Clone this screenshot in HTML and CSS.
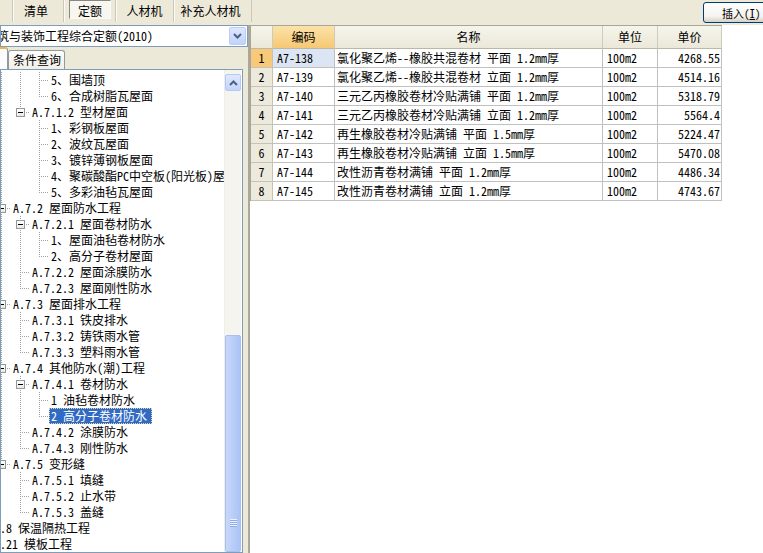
FILE: index.html
```html
<!DOCTYPE html>
<html lang="zh-CN">
<head>
<meta charset="utf-8">
<title>定额</title>
<link rel="stylesheet" href="styles.css">
</head>
<body>
<div class="app">
  <header class="toolbar">
    <nav class="tabs">
      <span class="tab t1">清单</span>
      <span class="tab t2"><span class="face">定额</span></span>
      <span class="tab t3">人材机</span>
      <span class="tab t4">补充人材机</span>
    </nav>
    <button class="insert">插入(<u>I</u>)</button>
  </header>
  <div class="main">
    <aside class="left">
      <div class="combo">
        <span class="combo-text">建筑与装饰工程综合定额(2010)</span>
        <span class="combo-btn"><svg width="9" height="6" viewBox="0 0 9 6"><polyline points="1,1 4.5,4.5 8,1" fill="none" stroke="#4d6185" stroke-width="2"/></svg></span>
      </div>
      <div class="subtabs">
        <span class="subtab current"></span>
        <span class="subtab">条件查询</span>
      </div>
      <div class="treebox">
        <div class="tree">
          <div class="row"><i class="g v"></i><i class="g v"></i><i class="g v"></i><i class="c t"></i><span class="lbl">5、围墙顶</span></div>
          <div class="row"><i class="g v"></i><i class="g v"></i><i class="g v"></i><i class="c e"></i><span class="lbl">6、合成树脂瓦屋面</span></div>
          <div class="row"><i class="g v"></i><i class="g v"></i><i class="c e"><b class="x"></b></i><span class="lbl">A.7.1.2 型材屋面</span></div>
          <div class="row"><i class="g v"></i><i class="g v"></i><i class="g"></i><i class="c t"></i><span class="lbl">1、彩钢板屋面</span></div>
          <div class="row"><i class="g v"></i><i class="g v"></i><i class="g"></i><i class="c t"></i><span class="lbl">2、波纹瓦屋面</span></div>
          <div class="row"><i class="g v"></i><i class="g v"></i><i class="g"></i><i class="c t"></i><span class="lbl">3、镀锌薄钢板屋面</span></div>
          <div class="row"><i class="g v"></i><i class="g v"></i><i class="g"></i><i class="c t"></i><span class="lbl">4、聚碳酸酯PC中空板(阳光板)屋面</span></div>
          <div class="row"><i class="g v"></i><i class="g v"></i><i class="g"></i><i class="c e"></i><span class="lbl">5、多彩油毡瓦屋面</span></div>
          <div class="row"><i class="g v"></i><i class="c t"><b class="x"></b></i><span class="lbl">A.7.2 屋面防水工程</span></div>
          <div class="row"><i class="g v"></i><i class="g v"></i><i class="c t"><b class="x"></b></i><span class="lbl">A.7.2.1 屋面卷材防水</span></div>
          <div class="row"><i class="g v"></i><i class="g v"></i><i class="g v"></i><i class="c t"></i><span class="lbl">1、屋面油毡卷材防水</span></div>
          <div class="row"><i class="g v"></i><i class="g v"></i><i class="g v"></i><i class="c e"></i><span class="lbl">2、高分子卷材屋面</span></div>
          <div class="row"><i class="g v"></i><i class="g v"></i><i class="c t"></i><span class="lbl">A.7.2.2 屋面涂膜防水</span></div>
          <div class="row"><i class="g v"></i><i class="g v"></i><i class="c e"></i><span class="lbl">A.7.2.3 屋面刚性防水</span></div>
          <div class="row"><i class="g v"></i><i class="c t"><b class="x"></b></i><span class="lbl">A.7.3 屋面排水工程</span></div>
          <div class="row"><i class="g v"></i><i class="g v"></i><i class="c t"></i><span class="lbl">A.7.3.1 铁皮排水</span></div>
          <div class="row"><i class="g v"></i><i class="g v"></i><i class="c t"></i><span class="lbl">A.7.3.2 铸铁雨水管</span></div>
          <div class="row"><i class="g v"></i><i class="g v"></i><i class="c e"></i><span class="lbl">A.7.3.3 塑料雨水管</span></div>
          <div class="row"><i class="g v"></i><i class="c t"><b class="x"></b></i><span class="lbl">A.7.4 其他防水(潮)工程</span></div>
          <div class="row"><i class="g v"></i><i class="g v"></i><i class="c t"><b class="x"></b></i><span class="lbl">A.7.4.1 卷材防水</span></div>
          <div class="row"><i class="g v"></i><i class="g v"></i><i class="g v"></i><i class="c t"></i><span class="lbl">1 油毡卷材防水</span></div>
          <div class="row"><i class="g v"></i><i class="g v"></i><i class="g v"></i><i class="c e"></i><span class="lbl selected">2 高分子卷材防水</span></div>
          <div class="row"><i class="g v"></i><i class="g v"></i><i class="c t"></i><span class="lbl">A.7.4.2 涂膜防水</span></div>
          <div class="row"><i class="g v"></i><i class="g v"></i><i class="c e"></i><span class="lbl">A.7.4.3 刚性防水</span></div>
          <div class="row"><i class="g v"></i><i class="c e"><b class="x"></b></i><span class="lbl">A.7.5 变形缝</span></div>
          <div class="row"><i class="g v"></i><i class="g"></i><i class="c t"></i><span class="lbl">A.7.5.1 填缝</span></div>
          <div class="row"><i class="g v"></i><i class="g"></i><i class="c t"></i><span class="lbl">A.7.5.2 止水带</span></div>
          <div class="row"><i class="g v"></i><i class="g"></i><i class="c e"></i><span class="lbl">A.7.5.3 盖缝</span></div>
          <div class="row"><i class="c t"><b class="x plus"></b></i><span class="lbl">A.8 保温隔热工程</span></div>
          <div class="row"><i class="c t"><b class="x plus"></b></i><span class="lbl">A.21 模板工程</span></div>
        </div>
        <div class="vscroll">
          <span class="sb-up"><svg width="9" height="6" viewBox="0 0 9 6"><polyline points="1,5 4.5,1.5 8,5" fill="none" stroke="#4d6185" stroke-width="2"/></svg></span>
          <span class="sb-gap"></span>
          <span class="sb-thumb"><span class="grip"></span></span>
        </div>
      </div>
    </aside>
    <section class="right">
      <div class="grid">
        <div class="h"></div><div class="h sel">编码</div><div class="h">名称</div><div class="h">单位</div><div class="h">单价</div>

        <div class="n sel">1</div><div class="d code cur">A7-138</div><div class="d name">氯化聚乙烯--橡胶共混卷材 平面 1.2mm厚</div><div class="d unit">100m2</div><div class="d price">4268.55</div>
        <div class="n">2</div><div class="d code">A7-139</div><div class="d name">氯化聚乙烯--橡胶共混卷材 立面 1.2mm厚</div><div class="d unit">100m2</div><div class="d price">4514.16</div>
        <div class="n">3</div><div class="d code">A7-140</div><div class="d name">三元乙丙橡胶卷材冷贴满铺 平面 1.2mm厚</div><div class="d unit">100m2</div><div class="d price">5318.79</div>
        <div class="n">4</div><div class="d code">A7-141</div><div class="d name">三元乙丙橡胶卷材冷贴满铺 立面 1.2mm厚</div><div class="d unit">100m2</div><div class="d price">5564.4</div>
        <div class="n">5</div><div class="d code">A7-142</div><div class="d name">再生橡胶卷材冷贴满铺 平面 1.5mm厚</div><div class="d unit">100m2</div><div class="d price">5224.47</div>
        <div class="n">6</div><div class="d code">A7-143</div><div class="d name">再生橡胶卷材冷贴满铺 立面 1.5mm厚</div><div class="d unit">100m2</div><div class="d price">5470.08</div>
        <div class="n">7</div><div class="d code">A7-144</div><div class="d name">改性沥青卷材满铺 平面 1.2mm厚</div><div class="d unit">100m2</div><div class="d price">4486.34</div>
        <div class="n">8</div><div class="d code">A7-145</div><div class="d name">改性沥青卷材满铺 立面 1.2mm厚</div><div class="d unit">100m2</div><div class="d price">4743.67</div>
      </div>
    </section>
  </div>
</div>
</body>
</html>
```
FILE: styles.css
```css
* { box-sizing: border-box; }
html, body { margin: 0; padding: 0; }
body {
  width: 763px;
  height: 553px;
  overflow: hidden;
  background: #ece9d8;
  font-family: "Noto Sans Mono CJK SC", "Noto Sans CJK SC", sans-serif;
  font-size: 12px;
  color: #000;
}
.app { display: flex; flex-direction: column; height: 553px; }

/* toolbar */
.toolbar {
  height: 25px;
  flex: none;
  display: flex;
  justify-content: space-between;
  align-items: flex-start;
  overflow: hidden;
}
.tabs { display: flex; height: 22px; margin-left: 12px; }
.tab {
  display: flex;
  align-items: center;
  justify-content: center;
  height: 22px;
  border-left: 1px solid #cbc8b8;
  box-shadow: inset 1px 0 #fbfaf6;
  line-height: 14px;
}
.tab:last-child { border-right: 1px solid #cbc8b8; }
.t1 { width: 51px; padding-right: 4px; }
.t2 { width: 52px; align-items: flex-start; }
.t3 { width: 58px; }
.t4 { width: 79px; padding-right: 4px; }
.face {
  width: 42px;
  height: 19px;
  margin-left: 1px;
  padding-top: 3px;
  text-align: center;
  border: 1px solid;
  border-color: #8a887e #fbfaf6 #fbfaf6 #8a887e;
  background: #f7f6f1;
}
.insert {
  margin: 2px -14px 0 0;
  width: 74px;
  height: 21px;
  padding: 0 0 0 18px;
  text-align: left;
  font: inherit;
  font-size: 11px;
  color: #000;
  border: 1px solid #003c74;
  border-radius: 3px;
  background: linear-gradient(#ffffff, #f4f3ee 70%, #d6d0c5);
}

/* main */
.main { flex: 1; display: flex; min-height: 0; }
.left { width: 248px; flex: none; display: flex; flex-direction: column; }
.combo {
  height: 22px;
  flex: none;
  border: 1px solid #7f9db9;
  background: #fff;
  display: flex;
  align-items: center;
  overflow: hidden;
}
.combo-text { flex: 1; margin-left: -16px; white-space: nowrap; overflow: hidden; line-height: 16px; }
.combo-btn {
  width: 17px;
  height: 18px;
  margin-right: 1px;
  flex: none;
  display: flex;
  align-items: center;
  justify-content: center;
  border: 1px solid #bccef6;
  border-radius: 2px;
  background: linear-gradient(#dde7fd, #c1d3fb);
}

.subtabs { height: 22px; flex: none; display: flex; align-items: flex-end; }
.subtab {
  height: 19px;
  padding: 0 3px 0 4px;
  line-height: 17px;
  border: 1px solid #919b9c;
  border-bottom: none;
  border-radius: 3px 3px 0 0;
  background: linear-gradient(#fefefe, #f1efe6);
}
.subtab.current {
  width: 8px;
  height: 22px;
  padding: 0;
  border-left: none;
  border-top: 2px solid #f5b44a;
  border-radius: 0 3px 0 0;
  background: #fcfcfe;
}

.treebox {
  flex: 1;
  width: 243px;
  min-height: 0;
  display: flex;
  border: 1px solid #7f9db9;
  background: #fff;
  overflow: hidden;
}
.tree { flex: 1; min-width: 0; overflow: hidden; padding-top: 2px; }
.row { display: flex; height: 16px; margin-left: -28px; white-space: nowrap; }
.g, .c { flex: none; width: 19px; height: 16px; display: block; }
.g.v, .c.t {
  background: repeating-linear-gradient(to bottom, #a0a0a0 0 1px, transparent 1px 2px) 9px 0 / 1px 16px no-repeat;
}
.c.t, .c.e { padding: 4px 0 0 5px; }
.c.t {
  background:
    repeating-linear-gradient(to bottom, #a0a0a0 0 1px, transparent 1px 2px) 9px 0 / 1px 16px no-repeat,
    repeating-linear-gradient(to right, #a0a0a0 0 1px, transparent 1px 2px) 9px 8px / 10px 1px no-repeat;
}
.c.e {
  background:
    repeating-linear-gradient(to bottom, #a0a0a0 0 1px, transparent 1px 2px) 9px 0 / 1px 9px no-repeat,
    repeating-linear-gradient(to right, #a0a0a0 0 1px, transparent 1px 2px) 9px 8px / 10px 1px no-repeat;
}
.x {
  display: block;
  width: 9px;
  height: 9px;
  border: 1px solid #8e9a9c;
  background: linear-gradient(#000, #000) center / 5px 1px no-repeat, linear-gradient(#fff, #eeeae0);
}
.x.plus {
  background:
    linear-gradient(#000, #000) center / 5px 1px no-repeat,
    linear-gradient(#000, #000) center / 1px 5px no-repeat,
    #fff;
}
.lbl { height: 16px; line-height: 16px; padding: 0 5px 0 2px; }
.lbl.selected { background: #316ac5; color: #fff; outline: 1px dotted #e8d890; outline-offset: -1px; }

.vscroll {
  width: 17px;
  flex: none;
  margin: 0 1px 0 0;
  display: flex;
  flex-direction: column;
  background: #f5f4ef;
  border-left: 1px solid #eeede6;
}
.sb-up {
  height: 17px;
  margin-top: 4px;
  display: flex;
  align-items: center;
  justify-content: center;
  border: 1px solid #b6c9f3;
  border-radius: 2px;
  background: linear-gradient(#dfe8fd, #c3d4fb);
}
.sb-gap { height: 244px; flex: none; }
.sb-thumb {
  flex: 1;
  border: 1px solid #a8bff0;
  border-radius: 2px;
  background: linear-gradient(to right, #c8d8fc, #b6cbf8 60%, #adc3f5);
  display: flex;
  justify-content: center;
}
.grip {
  width: 7px;
  height: 8px;
  margin-top: 183px;
  background: repeating-linear-gradient(to bottom, #eef4fe 0 1px, #8eabe6 1px 2px);
}

/* right grid */
.right {
  flex: 1;
  background: #fff;
  border-left: 2px solid #aca899;
}
.grid {
  display: grid;
  grid-template-columns: 22px 62px 268px 55px 64px;
  width: 472px;
  border-left: 1px solid #a8a698;
  border-top: 1px solid #a8a698;
}
.grid > div {
  display: flex;
  align-items: center;
  white-space: nowrap;
  overflow: hidden;
  height: 19px;
  line-height: 16px;
}
.h {
  height: 23px !important;
  justify-content: center;
  background: linear-gradient(#f6f5ec, #ebe8d9);
  border-right: 1px solid #cfcbbb;
  border-bottom: 1px solid #bcb8a8;
}
.h.sel { background: linear-gradient(#fbe2a8, #f7c873); }
.n {
  justify-content: center;
  background: #eceadc;
  border-right: 1px solid #c6c3b4;
  border-bottom: 1px solid #c6c3b4;
}
.n.sel { background: #f8c978; }
.d { border-right: 1px solid #c0c0c0; border-bottom: 1px solid #c0c0c0; }
.d.cur { background: #dce5f4; }
.code { padding-left: 4px; }
.name { padding-left: 2px; }
.unit { padding-left: 4px; }
.price { justify-content: flex-end; padding-right: 1px; }
```
